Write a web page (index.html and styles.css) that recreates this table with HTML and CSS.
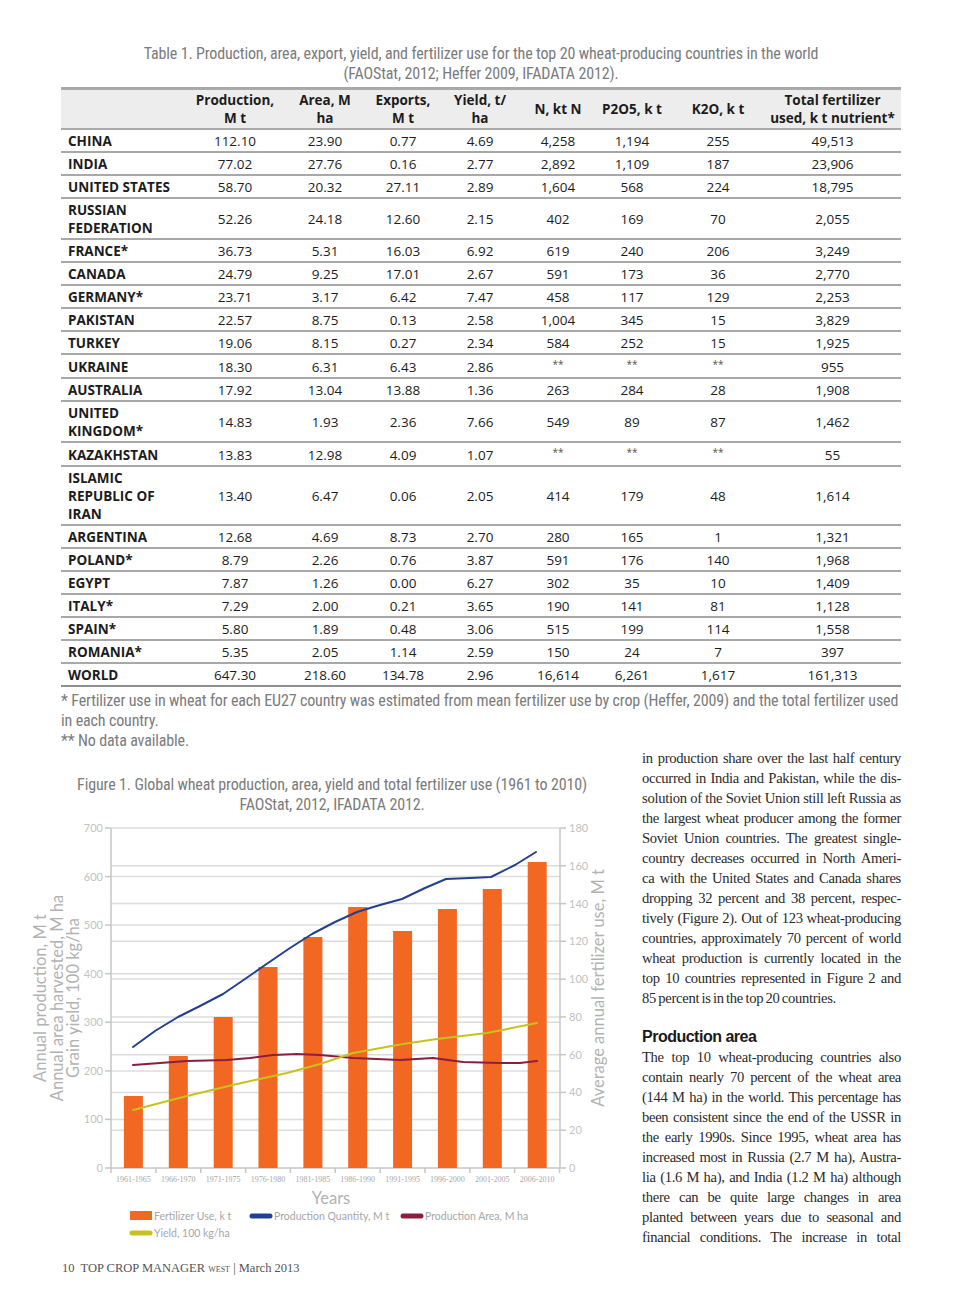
FILE: index.html
```html
<!DOCTYPE html>
<html lang="en">
<head>
<meta charset="utf-8">
<title>Top 20 wheat-producing countries</title>
<link rel="stylesheet" href="styles.css">
</head>
<body>
<div class="page">
  <p class="tcap">Table 1. Production, area, export, yield, and fertilizer use for the top 20 wheat-producing countries in the world<br>(FAOStat, 2012; Heffer 2009, IFADATA 2012).</p>
  <table class="data">
    <colgroup>
      <col class="w-country"><col class="w-prod"><col class="w-area"><col class="w-exp"><col class="w-yield"><col class="w-n"><col class="w-p"><col class="w-k"><col class="w-tot">
    </colgroup>
    <thead>
      <tr><th></th><th>Production,<br>M t</th><th>Area, M<br>ha</th><th>Exports,<br>M t</th><th>Yield, t/<br>ha</th><th>N, kt N</th><th>P2O5, k t</th><th>K2O, k t</th><th>Total fertilizer<br>used, k t nutrient*</th></tr>
    </thead>
    <tbody>
      <tr><td class="c">CHINA</td><td>112.10</td><td>23.90</td><td>0.77</td><td>4.69</td><td>4,258</td><td>1,194</td><td>255</td><td>49,513</td></tr>
      <tr><td class="c">INDIA</td><td>77.02</td><td>27.76</td><td>0.16</td><td>2.77</td><td>2,892</td><td>1,109</td><td>187</td><td>23,906</td></tr>
      <tr><td class="c">UNITED STATES</td><td>58.70</td><td>20.32</td><td>27.11</td><td>2.89</td><td>1,604</td><td>568</td><td>224</td><td>18,795</td></tr>
      <tr><td class="c">RUSSIAN<br>FEDERATION</td><td>52.26</td><td>24.18</td><td>12.60</td><td>2.15</td><td>402</td><td>169</td><td>70</td><td>2,055</td></tr>
      <tr><td class="c">FRANCE*</td><td>36.73</td><td>5.31</td><td>16.03</td><td>6.92</td><td>619</td><td>240</td><td>206</td><td>3,249</td></tr>
      <tr><td class="c">CANADA</td><td>24.79</td><td>9.25</td><td>17.01</td><td>2.67</td><td>591</td><td>173</td><td>36</td><td>2,770</td></tr>
      <tr><td class="c">GERMANY*</td><td>23.71</td><td>3.17</td><td>6.42</td><td>7.47</td><td>458</td><td>117</td><td>129</td><td>2,253</td></tr>
      <tr><td class="c">PAKISTAN</td><td>22.57</td><td>8.75</td><td>0.13</td><td>2.58</td><td>1,004</td><td>345</td><td>15</td><td>3,829</td></tr>
      <tr><td class="c">TURKEY</td><td>19.06</td><td>8.15</td><td>0.27</td><td>2.34</td><td>584</td><td>252</td><td>15</td><td>1,925</td></tr>
      <tr><td class="c">UKRAINE</td><td>18.30</td><td>6.31</td><td>6.43</td><td>2.86</td><td><span class="na">**</span></td><td><span class="na">**</span></td><td><span class="na">**</span></td><td>955</td></tr>
      <tr><td class="c">AUSTRALIA</td><td>17.92</td><td>13.04</td><td>13.88</td><td>1.36</td><td>263</td><td>284</td><td>28</td><td>1,908</td></tr>
      <tr><td class="c">UNITED<br>KINGDOM*</td><td>14.83</td><td>1.93</td><td>2.36</td><td>7.66</td><td>549</td><td>89</td><td>87</td><td>1,462</td></tr>
      <tr><td class="c">KAZAKHSTAN</td><td>13.83</td><td>12.98</td><td>4.09</td><td>1.07</td><td><span class="na">**</span></td><td><span class="na">**</span></td><td><span class="na">**</span></td><td>55</td></tr>
      <tr><td class="c">ISLAMIC<br>REPUBLIC OF<br>IRAN</td><td>13.40</td><td>6.47</td><td>0.06</td><td>2.05</td><td>414</td><td>179</td><td>48</td><td>1,614</td></tr>
      <tr><td class="c">ARGENTINA</td><td>12.68</td><td>4.69</td><td>8.73</td><td>2.70</td><td>280</td><td>165</td><td>1</td><td>1,321</td></tr>
      <tr><td class="c">POLAND*</td><td>8.79</td><td>2.26</td><td>0.76</td><td>3.87</td><td>591</td><td>176</td><td>140</td><td>1,968</td></tr>
      <tr><td class="c">EGYPT</td><td>7.87</td><td>1.26</td><td>0.00</td><td>6.27</td><td>302</td><td>35</td><td>10</td><td>1,409</td></tr>
      <tr><td class="c">ITALY*</td><td>7.29</td><td>2.00</td><td>0.21</td><td>3.65</td><td>190</td><td>141</td><td>81</td><td>1,128</td></tr>
      <tr><td class="c">SPAIN*</td><td>5.80</td><td>1.89</td><td>0.48</td><td>3.06</td><td>515</td><td>199</td><td>114</td><td>1,558</td></tr>
      <tr><td class="c">ROMANIA*</td><td>5.35</td><td>2.05</td><td>1.14</td><td>2.59</td><td>150</td><td>24</td><td>7</td><td>397</td></tr>
      <tr class="world"><td class="c">WORLD</td><td>647.30</td><td>218.60</td><td>134.78</td><td>2.96</td><td>16,614</td><td>6,261</td><td>1,617</td><td>161,313</td></tr>
    </tbody>
  </table>
  <p class="note">* Fertilizer use in wheat for each EU27 country was estimated from mean fertilizer use by crop (Heffer, 2009) and the total fertilizer used<br>in each country.<br>** No data available.</p>

  <div class="lower">
    <figure class="fig">
      <figcaption>Figure 1. Global wheat production, area, yield and total fertilizer use (1961 to 2010)<br>FAOStat, 2012, IFADATA 2012.</figcaption>
      <svg class="chart" width="616" height="433" viewBox="24 814 616 433" xmlns="http://www.w3.org/2000/svg">
        <g class="grid">
          <line x1="111" x2="560" y1="827" y2="827"/>
          <line x1="111" x2="560" y1="864.8" y2="864.8"/>
          <line x1="111" x2="560" y1="875.6" y2="875.6"/>
          <line x1="111" x2="560" y1="902.6" y2="902.6"/>
          <line x1="111" x2="560" y1="924.1" y2="924.1"/>
          <line x1="111" x2="560" y1="940.3" y2="940.3"/>
          <line x1="111" x2="560" y1="972.7" y2="972.7"/>
          <line x1="111" x2="560" y1="978.1" y2="978.1"/>
          <line x1="111" x2="560" y1="1015.9" y2="1015.9"/>
          <line x1="111" x2="560" y1="1021.3" y2="1021.3"/>
          <line x1="111" x2="560" y1="1053.7" y2="1053.7"/>
          <line x1="111" x2="560" y1="1069.9" y2="1069.9"/>
          <line x1="111" x2="560" y1="1091.4" y2="1091.4"/>
          <line x1="111" x2="560" y1="1118.4" y2="1118.4"/>
          <line x1="111" x2="560" y1="1129.2" y2="1129.2"/>
        </g>
        <g class="axis">
          <line x1="111" x2="111" y1="827" y2="1167"/>
          <line x1="560" x2="560" y1="827" y2="1167"/>
          <line x1="105" x2="566" y1="1167" y2="1167"/>
          <line x1="105" x2="111" y1="827" y2="827"/>
          <line x1="105" x2="111" y1="875.6" y2="875.6"/>
          <line x1="105" x2="111" y1="924.1" y2="924.1"/>
          <line x1="105" x2="111" y1="972.7" y2="972.7"/>
          <line x1="105" x2="111" y1="1021.3" y2="1021.3"/>
          <line x1="105" x2="111" y1="1069.9" y2="1069.9"/>
          <line x1="105" x2="111" y1="1118.4" y2="1118.4"/>
          <line x1="560" x2="566" y1="827" y2="827"/>
          <line x1="560" x2="566" y1="864.8" y2="864.8"/>
          <line x1="560" x2="566" y1="902.6" y2="902.6"/>
          <line x1="560" x2="566" y1="940.3" y2="940.3"/>
          <line x1="560" x2="566" y1="978.1" y2="978.1"/>
          <line x1="560" x2="566" y1="1015.9" y2="1015.9"/>
          <line x1="560" x2="566" y1="1053.7" y2="1053.7"/>
          <line x1="560" x2="566" y1="1091.4" y2="1091.4"/>
          <line x1="560" x2="566" y1="1129.2" y2="1129.2"/>
          <line x1="155.9" x2="155.9" y1="1167" y2="1172"/>
          <line x1="200.7" x2="200.7" y1="1167" y2="1172"/>
          <line x1="245.6" x2="245.6" y1="1167" y2="1172"/>
          <line x1="290.4" x2="290.4" y1="1167" y2="1172"/>
          <line x1="335.3" x2="335.3" y1="1167" y2="1172"/>
          <line x1="380.2" x2="380.2" y1="1167" y2="1172"/>
          <line x1="425" x2="425" y1="1167" y2="1172"/>
          <line x1="469.9" x2="469.9" y1="1167" y2="1172"/>
          <line x1="514.7" x2="514.7" y1="1167" y2="1172"/>
          <line x1="111" x2="111" y1="1167" y2="1172"/>
          <line x1="559.6" x2="559.6" y1="1167" y2="1172"/>
        </g>
        <g class="ylab-l">
          <text x="103" y="831">700</text>
          <text x="103" y="879.6">600</text>
          <text x="103" y="928.1">500</text>
          <text x="103" y="976.7">400</text>
          <text x="103" y="1025.3">300</text>
          <text x="103" y="1073.9">200</text>
          <text x="103" y="1122.4">100</text>
          <text x="103" y="1171">0</text>
        </g>
        <g class="ylab-r">
          <text x="569" y="831">180</text>
          <text x="569" y="868.8">160</text>
          <text x="569" y="906.6">140</text>
          <text x="569" y="944.3">120</text>
          <text x="569" y="982.1">100</text>
          <text x="569" y="1019.9">80</text>
          <text x="569" y="1057.7">60</text>
          <text x="569" y="1095.4">40</text>
          <text x="569" y="1133.2">20</text>
          <text x="569" y="1171">0</text>
        </g>
        <g class="bars">
          <rect x="123.9" y="1095" width="19" height="72"/>
          <rect x="168.8" y="1055" width="19" height="112"/>
          <rect x="213.7" y="1016" width="19" height="151"/>
          <rect x="258.5" y="966" width="19" height="201"/>
          <rect x="303.4" y="936" width="19" height="231"/>
          <rect x="348.2" y="906" width="19" height="261"/>
          <rect x="393.1" y="930" width="19" height="237"/>
          <rect x="437.9" y="908" width="19" height="259"/>
          <rect x="482.8" y="888" width="19" height="279"/>
          <rect x="527.7" y="861" width="19" height="306"/>
        </g>
        <polyline class="ln-prod" points="133,1046 155,1030 178,1016 200,1005 223,993 245,978 268,962 290,947 312,933 335,921 357,911 380,904 402,898 425,887 446,878 470,877 491,876 515,864 536,851"/>
        <polyline class="ln-area" points="133,1064 160,1062 187,1060 227,1059 250,1057 273,1054 297,1053 320,1054 353,1057 400,1059 433,1057 463,1061 500,1062 520,1062 537,1060"/>
        <polyline class="ln-yield" points="133,1109 160,1102 187,1095 237,1083 287,1072 320,1063 353,1052 403,1043 437,1038 487,1032 537,1022"/>
        <g class="xlab">
          <text x="133.4" y="1181">1961-1965</text>
          <text x="178.3" y="1181">1966-1970</text>
          <text x="223.2" y="1181">1971-1975</text>
          <text x="268" y="1181">1976-1980</text>
          <text x="312.9" y="1181">1981-1985</text>
          <text x="357.7" y="1181">1986-1990</text>
          <text x="402.6" y="1181">1991-1995</text>
          <text x="447.4" y="1181">1996-2000</text>
          <text x="492.3" y="1181">2001-2005</text>
          <text x="537.2" y="1181">2006-2010</text>
        </g>
        <g class="atitle">
          <text transform="translate(46 997) rotate(-90)">Annual production, M t</text>
          <text transform="translate(63 997) rotate(-90)">Annual area harvested, M ha</text>
          <text transform="translate(79 997) rotate(-90)">Grain yield, 100 kg/ha</text>
          <text transform="translate(604 987) rotate(-90)">Average annual fertilizer use, M t</text>
          <text x="331" y="1203">Years</text>
        </g>
        <g class="legend">
          <rect x="130" y="1210" width="22" height="9" fill="#f26722"/>
          <text x="154" y="1219">Fertilizer Use, k t</text>
          <line x1="252" x2="270" y1="1215" y2="1215" stroke="#22408f"/>
          <text x="274" y="1219">Production Quantity, M t</text>
          <line x1="403" x2="421" y1="1215" y2="1215" stroke="#8a1e3f"/>
          <text x="425" y="1219">Production Area, M ha</text>
          <line x1="132" x2="150" y1="1232" y2="1232" stroke="#c8c21e"/>
          <text x="154" y="1236">Yield, 100 kg/ha</text>
        </g>
      </svg>
    </figure>

    <div class="text">
      <p class="body">
        <span class="ln">in production share over the last half century</span>
        <span class="ln">occurred in India and Pakistan, while the dis-</span>
        <span class="ln">solution of the Soviet Union still left Russia as</span>
        <span class="ln">the largest wheat producer among the former</span>
        <span class="ln">Soviet Union countries. The greatest single-</span>
        <span class="ln">country decreases occurred in North Ameri-</span>
        <span class="ln">ca with the United States and Canada shares</span>
        <span class="ln">dropping 32 percent and 38 percent, respec-</span>
        <span class="ln">tively (Figure 2). Out of 123 wheat-producing</span>
        <span class="ln">countries, approximately 70 percent of world</span>
        <span class="ln">wheat production is currently located in the</span>
        <span class="ln">top 10 countries represented in Figure 2 and</span>
        <span class="ln last">85 percent is in the top 20 countries.</span>
      </p>
      <h2 class="head">Production area</h2>
      <p class="body">
        <span class="ln">The top 10 wheat-producing countries also</span>
        <span class="ln">contain nearly 70 percent of the wheat area</span>
        <span class="ln">(144 M ha) in the world. This percentage has</span>
        <span class="ln">been consistent since the end of the USSR in</span>
        <span class="ln">the early 1990s. Since 1995, wheat area has</span>
        <span class="ln">increased most in Russia (2.7 M ha), Austra-</span>
        <span class="ln">lia (1.6 M ha), and India (1.2 M ha) although</span>
        <span class="ln">there can be quite large changes in area</span>
        <span class="ln">planted between years due to seasonal and</span>
        <span class="ln">financial conditions. The increase in total</span>
      </p>
    </div>
  </div>

  <footer class="folio">10&nbsp; TOP CROP MANAGER <span class="sc">west</span> | March 2013</footer>
</div>
</body>
</html>
```

FILE: styles.css
```css
html, body {
  margin: 0;
  padding: 0;
  background: #ffffff;
}

.page {
  width: 960px;
  position: relative;
}

.tcap,
.note,
.fig figcaption {
  font-family: "Liberation Sans Narrow", "Roboto Condensed", "Liberation Sans", sans-serif;
  font-size: 16px;
  line-height: 20px;
  letter-spacing: -0.14px;
  color: #7b7b7b;
  white-space: nowrap;
}

.tcap {
  margin: 0 0 0 61px;
  padding-top: 44px;
  width: 840px;
  text-align: center;
}

/* ---------- table ---------- */
.data {
  margin: 3px 0 0 61px;
  width: 840px;
  table-layout: fixed;
  border-collapse: separate;
  border-spacing: 0;
  font-family: "Open Sans", "Noto Sans", sans-serif;
  font-size: 13.5px;
  color: #1c1c1c;
}

.w-country { width: 129px; }
.w-prod { width: 90px; }
.w-area { width: 90px; }
.w-exp { width: 66px; }
.w-yield { width: 88px; }
.w-n { width: 68px; }
.w-p { width: 80px; }
.w-k { width: 92px; }
.w-tot { width: 137px; }

.data th {
  background: #ededed;
  border-top: 3px solid #a9a9a9;
  border-bottom: 2px solid #a9a9a9;
  padding: 1px 0;
  line-height: 18px;
  font-weight: 700;
  text-align: center;
  vertical-align: middle;
  white-space: nowrap;
}

.data td {
  border-bottom: 2px solid #a8a8a8;
  padding: 2px 0 1px;
  line-height: 18px;
  text-align: center;
  vertical-align: middle;
  white-space: nowrap;
}

.data td.c {
  text-align: left;
  padding-left: 7px;
  font-weight: 700;
}

.data tr.world td {
  border-bottom-color: #8f8f8f;
}

.na {
  display: inline-block;
  font-size: 10px;
  color: #555;
  transform: translateY(-3px);
}

.note {
  margin: 4px 0 0 61px;
}

/* ---------- lower part ---------- */
.lower {
  display: flex;
  gap: 2px;
  margin-top: -3px;
  padding-left: 24px;
}

.fig {
  margin: 0;
  width: 616px;
  flex: none;
}

.fig figcaption {
  margin-top: 27px;
  text-align: center;
}

.chart {
  display: block;
}

.grid line {
  stroke: #dcdcdc;
  stroke-width: 1.5;
}

.axis line {
  stroke: #c6c6c6;
  stroke-width: 1.5;
}

.ylab-l text,
.ylab-r text {
  font-family: Lato, "Open Sans", sans-serif;
  font-size: 11px;
  fill: #c2c2c2;
}

.ylab-l text { text-anchor: end; }
.ylab-r text { text-anchor: start; }

.bars rect {
  fill: #f26722;
}

.ln-prod,
.ln-area,
.ln-yield {
  fill: none;
  stroke-width: 2;
  stroke-linejoin: round;
  stroke-linecap: round;
}

.ln-prod { stroke: #22408f; }
.ln-area { stroke: #8a1e3f; }
.ln-yield { stroke: #c8c21e; }

.xlab text {
  font-family: "Liberation Serif", serif;
  font-size: 8px;
  fill: #a8a8a8;
  text-anchor: middle;
}

.atitle text {
  font-family: Lato, "Open Sans", sans-serif;
  font-size: 16.5px;
  fill: #b2b2b2;
  text-anchor: middle;
}

.legend text {
  font-family: Lato, "Open Sans", sans-serif;
  font-size: 10.5px;
  fill: #a6a6a6;
}

.legend line {
  stroke-width: 5;
  stroke-linecap: round;
}

/* ---------- text column ---------- */
.text {
  width: 259px;
  flex: none;
}

.body {
  margin: 0;
  font-family: "Liberation Serif", "Times New Roman", serif;
  font-size: 14.6px;
  line-height: 20px;
  letter-spacing: -0.3px;
  word-spacing: -1px;
  color: #2a2a2a;
}

.ln {
  display: block;
  text-align: justify;
  text-align-last: justify;
}

.ln.last {
  text-align: left;
  text-align-last: left;
}

.head {
  margin: 19px 0 0;
  font-family: "Liberation Sans", Arial, sans-serif;
  font-weight: 700;
  font-size: 16px;
  line-height: 20px;
  letter-spacing: -0.5px;
  color: #1a1a1a;
}

.folio {
  margin: 10px 0 0 62px;
  font-family: "Liberation Serif", "Times New Roman", serif;
  font-size: 12.5px;
  line-height: 20px;
  color: #555;
}

.folio .sc {
  font-variant: small-caps;
  font-size: 12px;
}
```
